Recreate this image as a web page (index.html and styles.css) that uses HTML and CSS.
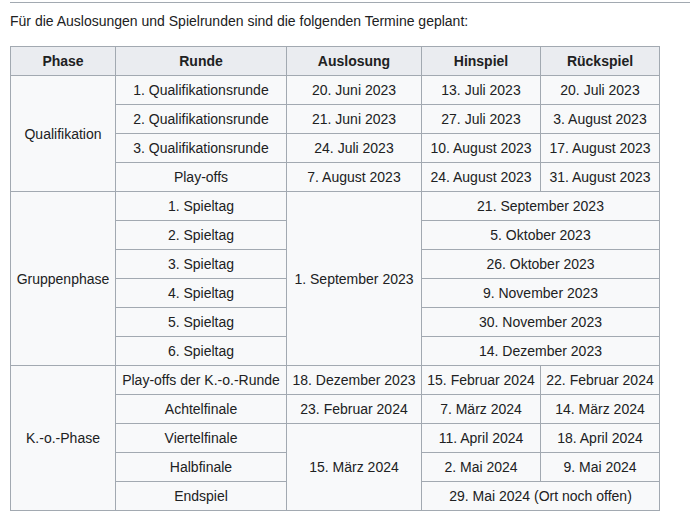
FILE: index.html
```html
<!DOCTYPE html>
<html lang="de">
<head>
<meta charset="utf-8">
<link rel="stylesheet" href="styles.css">
</head>
<body>
<div class="page">
  <div class="rule"></div>
  <p class="intro">Für die Auslosungen und Spielrunden sind die folgenden Termine geplant:</p>
  <table class="wikitable">
    <colgroup>
      <col class="c1"><col class="c2"><col class="c3"><col class="c4"><col class="c5">
    </colgroup>
    <thead>
      <tr><th>Phase</th><th>Runde</th><th>Auslosung</th><th>Hinspiel</th><th>Rückspiel</th></tr>
    </thead>
    <tbody>
      <tr><td rowspan="4">Qualifikation</td><td>1. Qualifikationsrunde</td><td>20. Juni 2023</td><td>13. Juli 2023</td><td>20. Juli 2023</td></tr>
      <tr><td>2. Qualifikationsrunde</td><td>21. Juni 2023</td><td>27. Juli 2023</td><td>3. August 2023</td></tr>
      <tr><td>3. Qualifikationsrunde</td><td>24. Juli 2023</td><td>10. August 2023</td><td>17. August 2023</td></tr>
      <tr><td>Play-offs</td><td>7. August 2023</td><td>24. August 2023</td><td>31. August 2023</td></tr>
      <tr><td rowspan="6">Gruppenphase</td><td>1. Spieltag</td><td rowspan="6">1. September 2023</td><td colspan="2">21. September 2023</td></tr>
      <tr><td>2. Spieltag</td><td colspan="2">5. Oktober 2023</td></tr>
      <tr><td>3. Spieltag</td><td colspan="2">26. Oktober 2023</td></tr>
      <tr><td>4. Spieltag</td><td colspan="2">9. November 2023</td></tr>
      <tr><td>5. Spieltag</td><td colspan="2">30. November 2023</td></tr>
      <tr><td>6. Spieltag</td><td colspan="2">14. Dezember 2023</td></tr>
      <tr><td rowspan="5">K.-o.-Phase</td><td>Play-offs der K.-o.-Runde</td><td>18. Dezember 2023</td><td>15. Februar 2024</td><td>22. Februar 2024</td></tr>
      <tr><td>Achtelfinale</td><td>23. Februar 2024</td><td>7. März 2024</td><td>14. März 2024</td></tr>
      <tr><td>Viertelfinale</td><td rowspan="3">15. März 2024</td><td>11. April 2024</td><td>18. April 2024</td></tr>
      <tr><td>Halbfinale</td><td>2. Mai 2024</td><td>9. Mai 2024</td></tr>
      <tr><td>Endspiel</td><td colspan="2">29. Mai 2024 (Ort noch offen)</td></tr>
    </tbody>
  </table>
</div>
</body>
</html>
```

FILE: styles.css
```css
html, body {
  margin: 0;
  padding: 0;
  background: #ffffff;
}
.page {
  padding: 2px 3px 0 10px;
  font-family: "Liberation Sans", Arial, sans-serif;
  font-size: 14px;
  color: #202122;
}
.rule {
  height: 1px;
  background: #a2a9b1;
}
.intro {
  margin: 7px 0 0 0;
  line-height: 22.4px;
}
.wikitable {
  margin-top: 14px;
  border-collapse: collapse;
  border: 1px solid #a2a9b1;
  background: #f8f9fa;
  table-layout: fixed;
  width: 649px;
}
.c1 { width: 105px; }
.c2 { width: 171px; }
.c3 { width: 135px; }
.c4 { width: 119px; }
.c5 { width: 119px; }
.wikitable th,
.wikitable td {
  border: 1px solid #a2a9b1;
  padding: 2.8px 3px;
  line-height: 22.4px;
  height: 22.4px;
  text-align: center;
  white-space: nowrap;
}
.wikitable th {
  background: #eaecf0;
  font-weight: bold;
}
```
